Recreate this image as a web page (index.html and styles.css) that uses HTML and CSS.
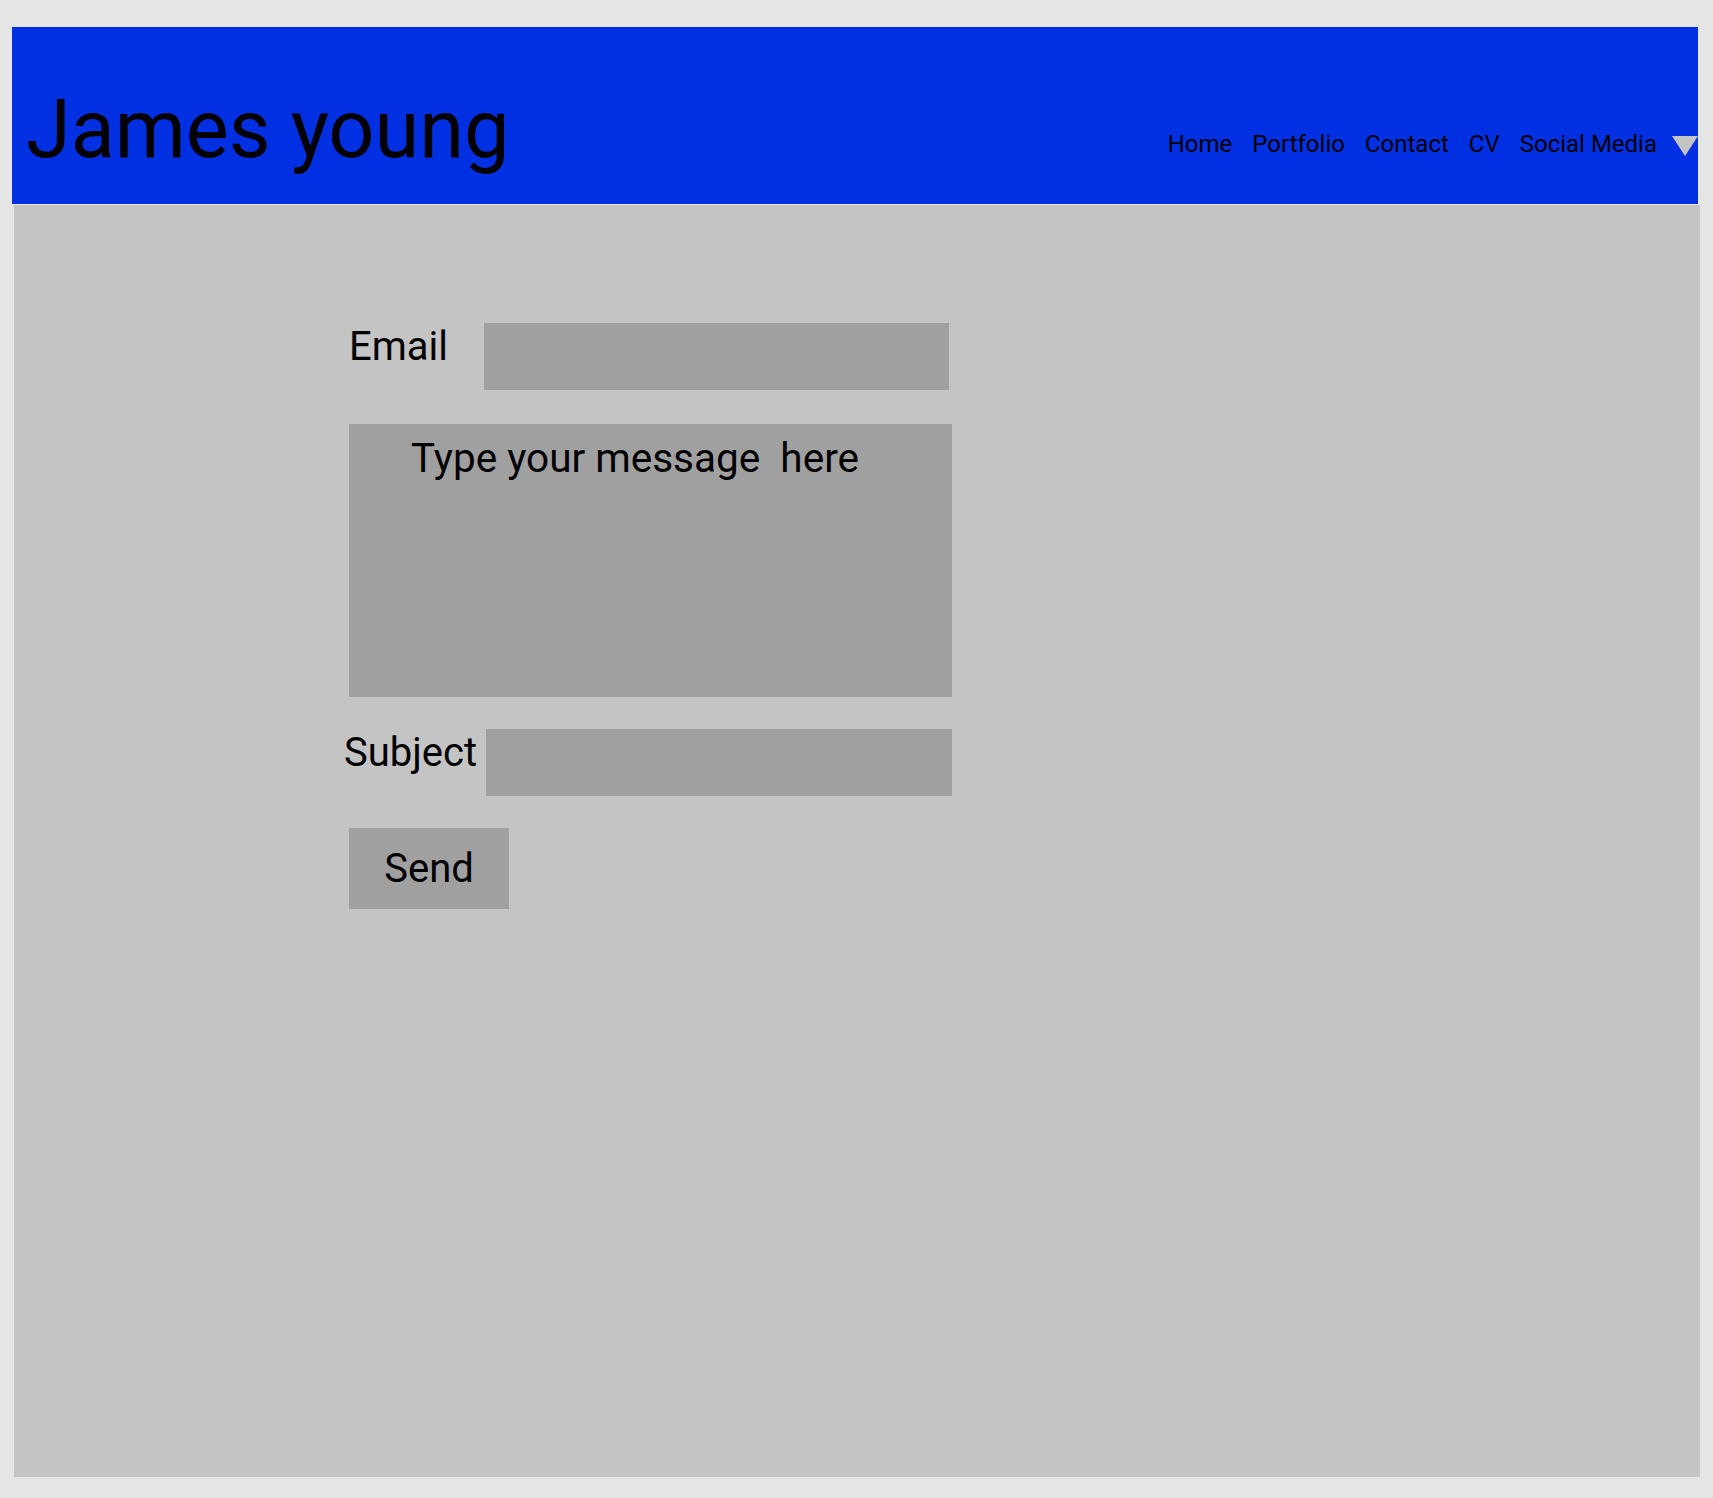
FILE: index.html
```html
<!DOCTYPE html>
<html lang="en">
<head>
<meta charset="utf-8">
<title>James young - Contact</title>
<link rel="stylesheet" href="styles.css">
</head>
<body>
<header class="site-header">
  <h1 class="site-title">James young</h1>
  <nav class="site-nav">
    <a class="nav-link" href="#">Home</a>
    <a class="nav-link" href="#">Portfolio</a>
    <a class="nav-link" href="#">Contact</a>
    <a class="nav-link" href="#">CV</a>
    <a class="nav-link" href="#">Social Media</a>
    <span class="nav-caret" aria-hidden="true"></span>
  </nav>
</header>
<main class="content">
  <form class="contact-form">
    <div class="form-row">
      <label class="field-label label-email" for="email">Email</label>
      <input class="field-input input-email" id="email" type="email">
    </div>
    <textarea class="message" placeholder="Type your message  here"></textarea>
    <div class="form-row row-subject">
      <label class="field-label label-subject" for="subject">Subject</label>
      <input class="field-input input-subject" id="subject" type="text">
    </div>
    <button class="send-btn" type="button">Send</button>
  </form>
</main>
</body>
</html>
```

FILE: styles.css
```css
* { box-sizing: border-box; }

html, body {
  margin: 0;
  padding: 0;
}

body {
  background: #e5e5e5;
  font-family: Roboto, "Liberation Sans", Arial, sans-serif;
  color: #000;
  padding-top: 27px;
  min-height: 1498px;
}

.site-header {
  margin-left: 12px;
  width: 1686px;
  height: 177px;
  background: #0030e2;
  display: flex;
  align-items: flex-start;
}

.site-title {
  margin: 63px 0 0 14px;
  font-size: 81px;
  line-height: 80px;
  font-weight: 400;
  letter-spacing: 0;
}

.site-nav {
  margin-left: auto;
  display: flex;
  align-items: flex-start;
  gap: 20px;
  padding-top: 106px;
}

.nav-link {
  font-size: 24px;
  line-height: 23px;
  color: #000;
  text-decoration: none;
}

.nav-caret {
  width: 0;
  height: 0;
  margin-top: 3px;
  margin-left: -5px;
  border-left: 13px solid transparent;
  border-right: 13px solid transparent;
  border-top: 20px solid #c4c4c4;
}

.content {
  display: block;
  margin: 1px 0 0 14px;
  width: 1686px;
  height: 1272px;
  background: #c4c4c4;
  padding: 118px 0 0 328px;
}

.contact-form {
  display: flex;
  flex-direction: column;
  align-items: flex-start;
}

.form-row {
  display: flex;
  align-items: flex-start;
}

.field-label {
  font-size: 40px;
  line-height: 40px;
  margin-top: 4px;
}

.label-email {
  margin-left: 7px;
  width: 135px;
}

.label-subject {
  margin-left: 2px;
  width: 142px;
}

.field-input {
  border: 0;
  outline: 0;
  background: #a0a0a0;
  height: 67px;
  font-family: inherit;
  font-size: 24px;
  padding: 0 12px;
}

.input-email { width: 465px; }
.input-subject { width: 466px; }

.message {
  margin: 34px 0 0 7px;
  width: 603px;
  height: 273px;
  border: 0;
  outline: 0;
  resize: none;
  background: #a0a0a0;
  font-family: inherit;
  font-size: 40.5px;
  line-height: 40px;
  padding: 14px 20px 0 62px;
  color: #000;
  white-space: pre-wrap;
}

.message::placeholder {
  color: #000;
  opacity: 1;
}

.row-subject {
  margin-top: 32px;
}

.send-btn {
  margin: 32px 0 0 7px;
  width: 160px;
  height: 81px;
  border: 0;
  background: #a0a0a0;
  font-family: inherit;
  font-size: 40px;
  line-height: 40px;
  color: #000;
  padding: 0;
}
```
